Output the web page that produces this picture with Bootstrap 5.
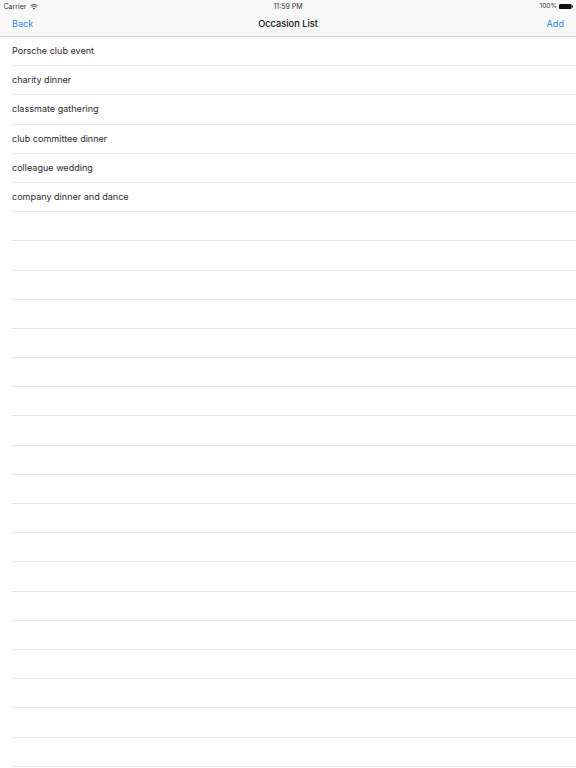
<!DOCTYPE html>
<html lang="en">
<head>
<meta charset="utf-8">
<title>Occasion List</title>
<link href="https://cdn.jsdelivr.net/npm/bootstrap@5.3.0/dist/css/bootstrap.min.css" rel="stylesheet">
<style>
html,body{height:768px;overflow:hidden;background:#fff;}
body{font-family:Inter,"Liberation Sans",sans-serif;color:#222;}
.app-head{background:#f8f8f8;border-bottom:1px solid #d9d9d9;height:37px;}
.status-line{height:13px;font-size:7px;line-height:13px;color:#333;padding:0 3.5px;}
.status-side{flex:1 1 0;}
.status-gap{gap:1.5px;}
.status-pct{font-size:6.6px;}
.nav-line{height:22.5px;padding:0 12px;font-size:9.1px;}
.nav-link-ios{color:#2a84f7;text-decoration:none;}
.nav-title{color:#111;font-weight:500;font-size:9.25px;}
.occasion-row{height:29.2px;margin-left:12px;padding:0;border:0;border-bottom:1px solid #e6e6e6;border-radius:0;font-size:9.05px;line-height:28.4px;color:#2b2b2b;background:transparent;}
</style>
</head>
<body>
<header class="app-head">
  <div class="status-line d-flex align-items-center">
    <div class="status-side d-flex align-items-center gap-1">
      <span>Carrier</span>
      <svg width="8" height="6" viewBox="0 0 8 6" aria-hidden="true"><g fill="none" stroke="#444" stroke-width=".9"><path d="M.4 2a5 5 0 0 1 7.2 0"/><path d="M1.6 3.2a3.3 3.3 0 0 1 4.8 0"/></g><path d="M4 5.8 2.8 4.4a1.7 1.7 0 0 1 2.4 0Z" fill="#444"/></svg>
    </div>
    <span>11:59 PM</span>
    <div class="status-side d-flex align-items-center justify-content-end status-gap">
      <span class="status-pct">100%</span>
      <svg width="14" height="5" viewBox="0 0 14 5" aria-hidden="true"><rect width="12.6" height="5" rx="1" fill="#111"/><rect x="13" y="1.5" width="1" height="2" fill="#111"/></svg>
    </div>
  </div>
  <div class="nav-line d-flex align-items-center">
    <div class="status-side"><a class="nav-link-ios" href="#">Back</a></div>
    <span class="nav-title">Occasion List</span>
    <div class="status-side text-end"><a class="nav-link-ios" href="#">Add</a></div>
  </div>
</header>
<ul class="list-group list-group-flush">
  <li class="list-group-item occasion-row">Porsche club event</li>
  <li class="list-group-item occasion-row">charity dinner</li>
  <li class="list-group-item occasion-row">classmate gathering</li>
  <li class="list-group-item occasion-row">club committee dinner</li>
  <li class="list-group-item occasion-row">colleague wedding</li>
  <li class="list-group-item occasion-row">company dinner and dance</li>
  <li class="list-group-item occasion-row"></li>
  <li class="list-group-item occasion-row"></li>
  <li class="list-group-item occasion-row"></li>
  <li class="list-group-item occasion-row"></li>
  <li class="list-group-item occasion-row"></li>
  <li class="list-group-item occasion-row"></li>
  <li class="list-group-item occasion-row"></li>
  <li class="list-group-item occasion-row"></li>
  <li class="list-group-item occasion-row"></li>
  <li class="list-group-item occasion-row"></li>
  <li class="list-group-item occasion-row"></li>
  <li class="list-group-item occasion-row"></li>
  <li class="list-group-item occasion-row"></li>
  <li class="list-group-item occasion-row"></li>
  <li class="list-group-item occasion-row"></li>
  <li class="list-group-item occasion-row"></li>
  <li class="list-group-item occasion-row"></li>
  <li class="list-group-item occasion-row"></li>
  <li class="list-group-item occasion-row"></li>
  <li class="list-group-item occasion-row"></li>
</ul>
<script src="https://cdn.jsdelivr.net/npm/bootstrap@5.3.0/dist/js/bootstrap.bundle.min.js"></script>
</body>
</html>
